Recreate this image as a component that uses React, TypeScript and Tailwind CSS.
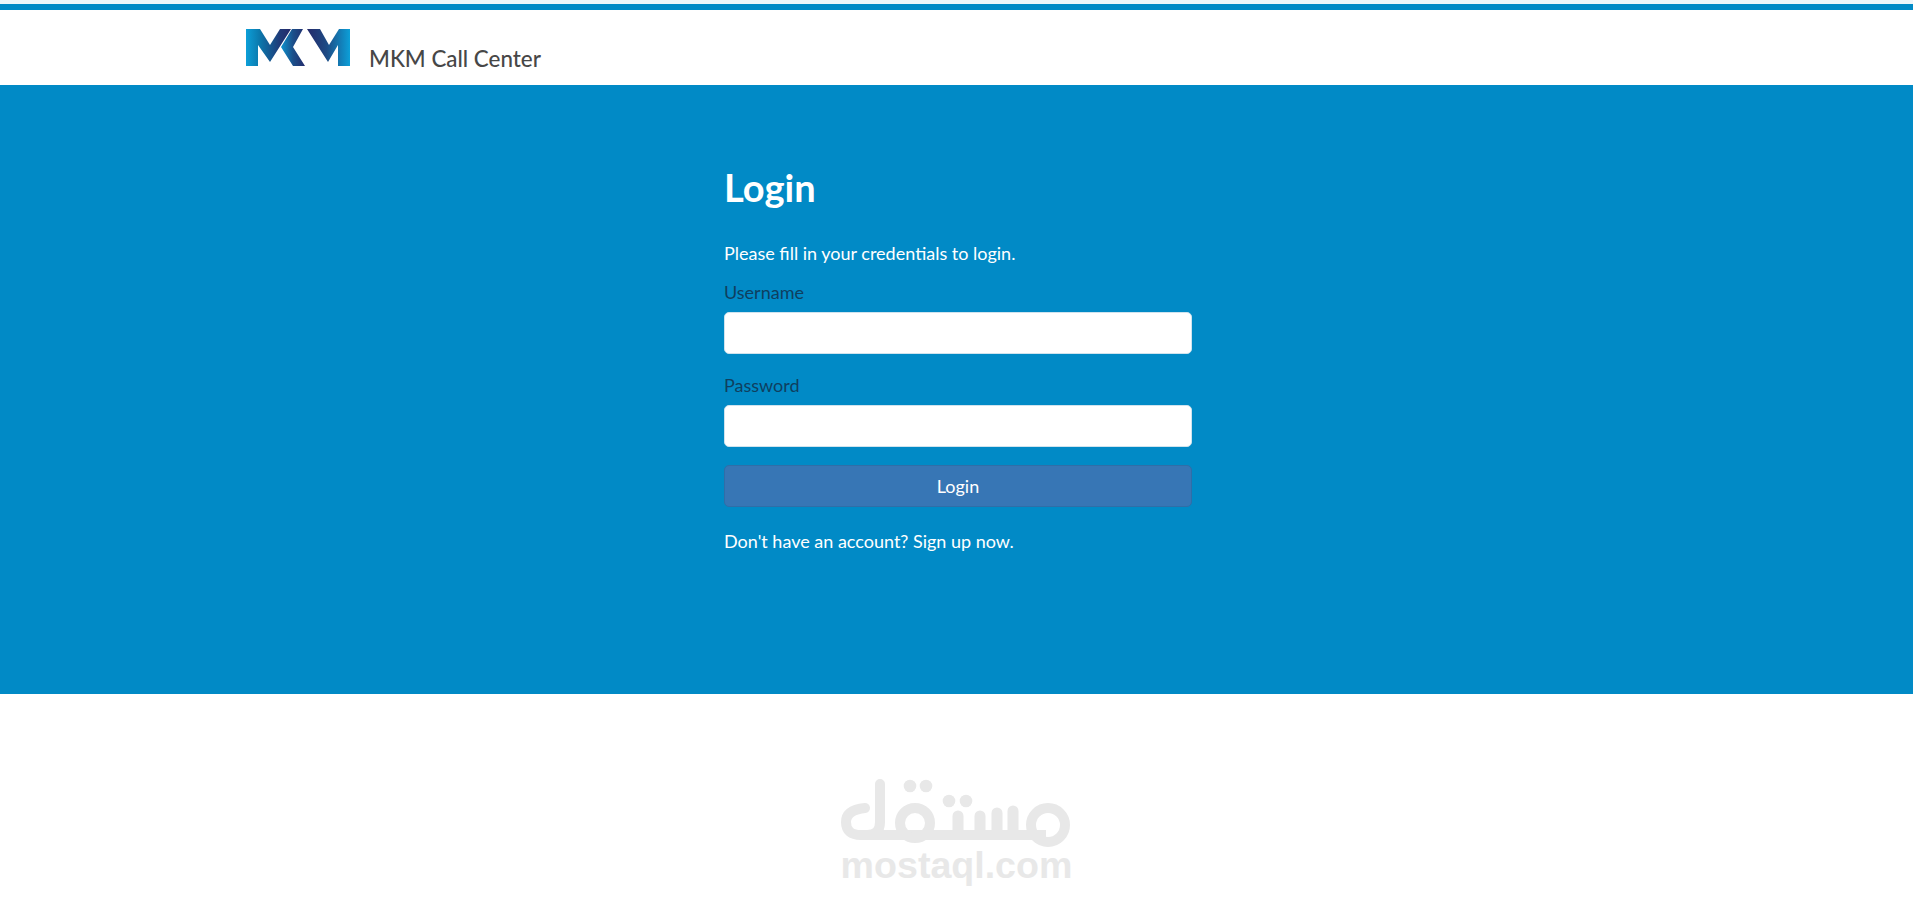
function MkmLogo() {
  return (
    <svg width="106" height="39" viewBox="0 0 106 39" className="shrink-0">
      <defs>
        <linearGradient id="mkmLeft" x1="0" y1="0" x2="1" y2="0">
          <stop offset="0" stopColor="#0c9fd8" />
          <stop offset="0.3" stopColor="#0b79ad" />
          <stop offset="0.75" stopColor="#1f3a78" />
          <stop offset="1" stopColor="#252a6a" />
        </linearGradient>
        <linearGradient id="mkmMid" x1="0" y1="0" x2="1" y2="0">
          <stop offset="0" stopColor="#0d93cf" />
          <stop offset="0.5" stopColor="#1b4f8a" />
          <stop offset="1" stopColor="#232c6c" />
        </linearGradient>
        <linearGradient id="mkmRight" x1="0" y1="0" x2="1" y2="0">
          <stop offset="0" stopColor="#252a6a" />
          <stop offset="0.45" stopColor="#1d4a84" />
          <stop offset="1" stopColor="#0c9fd8" />
        </linearGradient>
      </defs>
      <polygon points="0,0 14,0 24,16 34,0 45,0 24,33 12,16 12,37 0,37" fill="url(#mkmLeft)" />
      <polygon points="46,0 35,18 47,37 59,37 47,18 57,0" fill="url(#mkmMid)" />
      <polygon points="61,0 74,0 83,16 93,0 104,0 104,37 92,37 92,16 82,33" fill="url(#mkmRight)" />
    </svg>
  )
}

function MostaqlLogo() {
  return (
    <svg width="232" height="70" viewBox="0 0 232 70" className="shrink-0">
      <g fill="none" stroke="#e8e8e8" strokeLinecap="round">
        <path strokeWidth="10" d="M39 6 V44 Q39 57 26 57 H20 Q5 57 5 44 Q5 32 24 30" />
        <path strokeWidth="10" strokeLinecap="butt" d="M24 57 H205" />
        <circle strokeWidth="10" cx="74" cy="45" r="15" />
        <path strokeWidth="11" d="M117 38 V54 M139 38 V54 M156 35 V54 M172 33 V54" />
        <circle strokeWidth="10" cx="207" cy="47" r="17" />
      </g>
      <g fill="#e8e8e8">
        <circle cx="69" cy="8" r="6.3" />
        <circle cx="85" cy="8" r="6.3" />
        <circle cx="108" cy="23" r="6.3" />
        <circle cx="125" cy="23" r="6.3" />
      </g>
    </svg>
  )
}

function Field({ label }: { label: string }) {
  return (
    <div className="mb-[18px]">
      <label className="mb-[7px] block text-[18px] leading-[26px] text-[#0f3f5f]">{label}</label>
      <input
        type="text"
        className="block h-[42px] w-full rounded-[5px] border border-[#cfe3ee] bg-white"
      />
    </div>
  )
}

export default function App() {
  return (
    <div className="min-h-[904px] bg-white font-['Lato','Liberation_Sans',sans-serif]">
      <div className="border-t-[4px] border-[#eef6fa]">
        <div className="h-[6px] bg-[#018ac6]" />
      </div>
      <header className="flex h-[75px] items-start pl-[246px] pt-[19px]">
        <MkmLogo />
        <span className="ml-[17px] mt-[16px] text-[22.4px] font-medium leading-[28px] text-[#474747]">
          MKM Call Center
        </span>
      </header>
      <main className="h-[609px] bg-[#018ac6] pt-[81px]">
        <div className="ml-[724px] w-[468px]">
          <h2 className="mb-[32px] text-[38px] font-bold leading-[42px] text-white">Login</h2>
          <p className="mb-[13px] text-[18px] leading-[26px] text-white">
            Please fill in your credentials to login.
          </p>
          <form>
            <Field label="Username" />
            <Field label="Password" />
            <button
              type="button"
              className="mb-[21px] block h-[42px] w-full rounded-[5px] border border-[#2f6ea8] bg-[#3776b5] text-[18px] text-white"
            >
              Login
            </button>
            <p className="text-[18px] leading-[26px] text-white">
              Don't have an account? Sign up now.
            </p>
          </form>
        </div>
      </main>
      <footer className="flex flex-col items-center pt-[84px]">
        <MostaqlLogo />
        <span className="-mt-[3px] font-['Liberation_Sans',sans-serif] text-[37.6px] font-bold leading-[40px] text-[#e8e8e8]">
          mostaql.com
        </span>
      </footer>
    </div>
  )
}
